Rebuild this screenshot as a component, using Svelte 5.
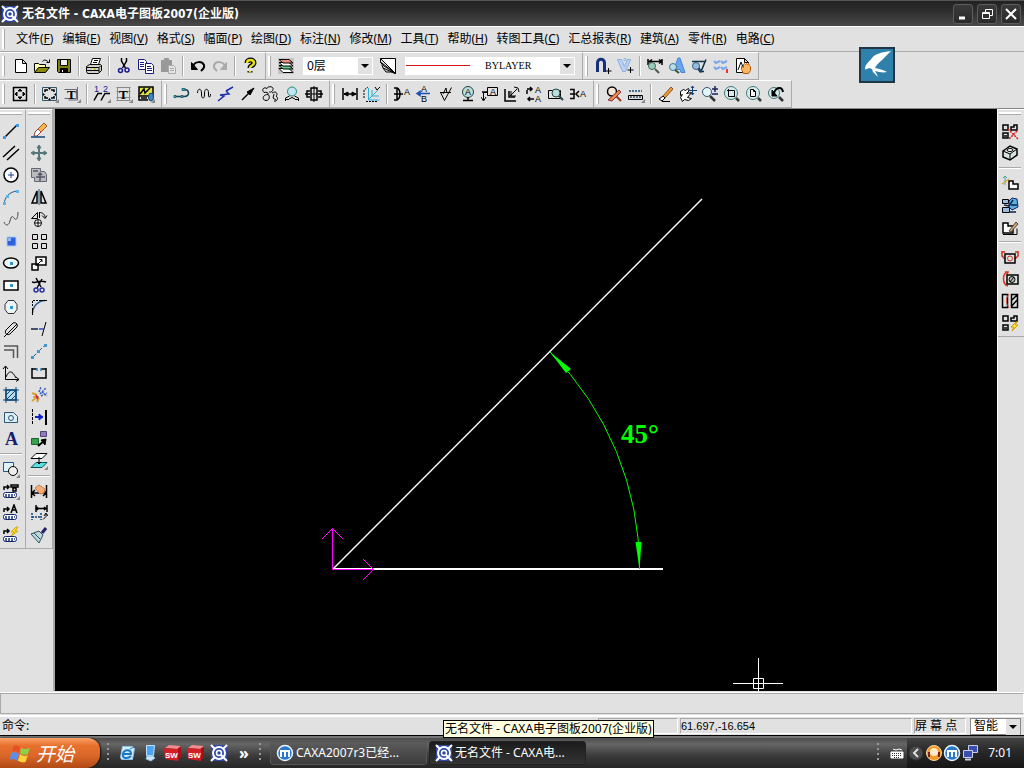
<script lang="ts">
    // every glyph lives on an 18x18 grid, black 1px outline unless it says otherwise
    const icons: Record<string, string> = {
        // file toolbar
        new: '<path fill="#fff" d="M4.5 2.5h7l4 4v9h-11z M11.5 2.5v4h4"/>',
        open: '<path fill="#ffffb0" d="M1.5 14.5v-8h4l1 1h6v3"/><path fill="#8a8a10" d="M1.5 15.5l4-5h11l-4 5z"/><path d="M9.5 4.5c1-2 4-2 6 1M16.5 2.5v3h-3"/>',
        save: '<path fill="#808010" d="M2.5 2.5h13v13h-12l-1-1z"/><path fill="#eee" d="M5.5 2.5h7v6h-7z"/><path fill="#000" d="M5.5 11.5h7v4h-7z"/><path stroke="#fff" d="M7.5 13v2"/>',
        print: '<path fill="#fff" d="M5.500 7.500l2-6h8l-2 6z"/><path d="M9 3.500h4M8 5.500h4"/><path fill="#d0d0c8" d="M1.500 9.500l3-2h11l1 1v5l-3 3h-11l-1-2z"/><path d="M2 10.500h12v5M2 13.500h12M14 10.500l2-2"/><path stroke="#cc0" stroke-width="1.500" d="M9 12h2"/>',
        cut: '<path stroke-width="1.500" d="M6.500 1v3l4 7M11.500 1v3l-4 7"/><g stroke="#1a1a90" stroke-width="1.500"><circle cx="5.500" cy="13.500" r="2"/><circle cx="12" cy="13" r="2"/></g>',
        copy: '<g stroke="#1a1a80" fill="#fff"><path d="M1.500 2.500h6l2 2v8h-8z"/><path d="M8.500 6.500h6l2 2v8h-8z"/><path d="M3 5.500h4M3 7.500h4M3 9.500h4M10 9.500h4M10 11.500h5M10 13.500h5"/></g>',
        paste: '<path fill="#999" stroke="#999" d="M2.500 3.500h10v11h-10z M5.500 1.500h4v3h-4z"/><path fill="#e4e4e4" stroke="#aaa" d="M9.500 8.500h5l2 2v6h-7z M11 11.500h4M11 13.500h4"/>',
        undo: '<path stroke-width="2" d="M4 9c2-5 9-5 11-1c1 3-1 4-3 6"/><path fill="#000" d="M2.500 5.500v7h6z"/>',
        redo: '<g stroke="#aaa"><path stroke-width="2" d="M14 9c-2-5-9-5-11-1c-1 3 1 4 3 6"/><path fill="#aaa" d="M15.500 5.500v7h-6z"/></g>',
        help: '<path stroke-width="5" d="M6 6c0-4 7-4 7 0c0 3-4 2-4 5M9 14v1.500"/><path stroke="#e8e010" stroke-width="2.500" d="M6 6c0-4 7-4 7 0c0 3-4 2-4 5M9 14v1.500"/>',
        // layers
        layers: '<path fill="#c4c4c4" stroke="none" d="M1 1h16v16H1z"/><path fill="#fff" d="M2 11.500h10l4 4H6z"/><path fill="#6c8" d="M2 8.500h10l4 3.500H6z"/><path fill="#fff" d="M2 5.500h10l4 3.500H6z"/><path fill="#f08a7a" d="M2 2.500h10l4 3.500H6z"/>',
        layerProps: '<path d="M1.500 1.500h15v15z" fill="#fff"/><path d="M1.500 1.500v3.500l15 11.500M1.500 5l2 3 13 8.500M3 8l1 3 12 5.500M4 11l3 4h8"/>',
        // snap
        magnet: '<path stroke="#16307e" stroke-width="3" d="M3.500 15V6c0-5 7-5 7 0v9"/><path d="M14.500 11v6M11.500 14h6"/>',
        snapV: '<path fill="#b7d2f4" stroke="#8bb0e4" d="M1.500 2.500h4l3 7 3-7h3l-5 12h-3z"/><path fill="#eef" stroke="#9bc" d="M8 1.500h2v2H8z"/><path d="M14.500 10v6M11.500 13h6"/>',
        dimEdit: '<path stroke-width="1.500" d="M2 2v6M16 2v6M3 4.500h13M3 4.500l3-2M3 4.500l3 2M16 4.500l-3-2M16 4.500l-3 2"/><circle cx="6" cy="9" r="3.500" fill="#9cb" stroke="#465"/><path stroke="#555" stroke-width="2" d="M9 12l4 4"/>',
        textFind: '<path fill="#6aa5ee" stroke="#4a84d8" d="M10 1h2l5 14.500h-4l-1-3H8l-1-3z"/><circle cx="5" cy="10" r="3.500" fill="#bde" stroke="#478"/><path stroke="#353" stroke-width="2" d="M7 13l4 3"/>',
        roughFind: '<path stroke="#134" stroke-width="1.500" d="M2 4.500h14M5 4.500l6 10 5-12M9 14.500h5"/><circle cx="6" cy="9" r="3.500" fill="#9bd" stroke="#368"/><path stroke="#246" stroke-width="2" d="M8 12l3 3"/>',
        waves: '<path stroke="#7aa6ec" stroke-width="2" d="M2 4l2 2 4-2M9 4l2 2 4-2M2 10l2 2 4-2M9 10l2 2 4-2"/><path stroke="#e33" stroke-width="2" d="M15 12v4"/>',
        pagePan: '<path fill="#fff" d="M2.500 1.500h8l4 4v10h-12z M10.500 1.500v4h4"/><path d="M4 13l3-8 2 5"/><path fill="#f9b765" stroke="#b45a10" d="M7.500 9.500l2 1v-3l1-1 1 1 1-1 1 1 1-1 1 2 1 1v4l-2 3h-5l-2-4z"/>',
        // sheet setup
        fit: '<path d="M2.500 2.500h13v13h-13z" stroke-width="1.500"/><path fill="#000" d="M9 4l2 2H7zM9 14l2-2H7zM4 9l2-2v4zM14 9l-2-2v4z"/>',
        frame: '<path stroke="#356" d="M1.500 2.500h14v13h-14z"/><path stroke-width="1.500" d="M4 7V5h3M10 5h3v2M13 11v2h-3M7 13H4v-2"/><path fill="#000" stroke="none" d="M7 3h3l-1.500 2zM7 15h3l-1.500-2zM2 8l2 1.500L2 11zM15 8l-2 1.500 2 1.500z"/><path fill="#888" stroke="none" d="M18 14v4h-4z"/>',
        frameText: '<path stroke="#667" d="M1.500 4.500h12v9h-12M14.500 2v13h-9"/><text x="4" y="14">T</text><path fill="#888" stroke="none" d="M18 14v4h-4z"/>',
        number: '<text class="small num" x="1" y="7">1</text><text class="small num" x="10" y="7">2</text><path d="M1 15.500l4-7h4M8 15.500l4-7h5" stroke-width="1.500"/><path fill="#888" stroke="none" d="M18 14v4h-4z"/>',
        table: '<path stroke="#888" d="M1.500 2.500h14M1.500 6.500h14M1.500 12.500h14M1.500 15.500h14M2.500 2v14M14.500 2v14"/><text x="4" y="14">T</text><path fill="#888" stroke="none" d="M18 14v4h-4z"/>',
        sheet: '<path fill="#e6e04a" stroke-width="1.500" d="M2 2h14v9H2z"/><path stroke-width="1.500" d="M3 9l4-5 1 4 5-5M2 11v4h9M4 13h6"/><ellipse cx="14" cy="12" rx="2.500" ry="4" fill="#48b" stroke="#147"/><path fill="#888" stroke="none" d="M18 14v4h-4z"/>',
        // advanced curves
        hook: '<path stroke="#19404a" stroke-width="1.500" d="M2 11.500h9c6 0 6-7 0-7"/><path stroke="#267" fill="#5bc" d="M1 10.500h2v2H1zM8 10.500h2v2H8zM9 3.500h3v2H9z"/>',
        wave: '<path d="M2.500 8c0-5 4-5 4 0v2c0 4 3 4 3 0V8c0-5 4-5 4 0v2c0 3 2 3 2-1"/>',
        breakLine: '<path stroke="#1d2fa8" stroke-width="1.500" d="M1 16l6-5-4-1M3 10l9-1-3-3M9 6l7-4"/>',
        arrow: '<path stroke-width="1.500" d="M3 15L12 6"/><path fill="#000" d="M15 3l-7 4 3 3z"/>',
        cloud: '<path d="M3 7.500c-3-3 0-6 3-4c1-3 7-2 6 1c-1 3-3 3-4 2M3 7.500c3-1 5 1 4 2c-6 0-6 6-2 6c4 0 4-5 2-6M11 8c5-3 6 2 4 3c3 2 1 6-2 5M13 9l-1 4 3 2"/>',
        shaft: '<circle cx="9" cy="6.500" r="4.500" fill="#bfe4f2" stroke="#287"/><path d="M2.500 16v-3l4-2M15.500 16v-3l-4-2M3 14.500h3M12 14.500h3M6 14l3-1.500 3 1.500"/>',
        section: '<path stroke-width="1.500" d="M5 6H2v6h3M13 6h3v6h-3M6 3h6v12H6zM0 9h5M13 9h5"/><path d="M9 1v16M6 9h6"/>',
        // dimensions
        dim: '<path stroke-width="1.500" d="M2 3v12M16 3v12M3 9h12"/><path fill="#000" d="M3 9l4-2v4zM15 9l-4-2v4z"/>',
        dimCoord: '<path stroke="#2ab0dc" d="M5.500 3v12h11M5 15L15 5M9 5v6h7"/><path stroke-dasharray="2 1" d="M1 13V5l4-3M3 16.500h11"/><path d="M12 2l2 3 3-3"/>',
        tolerance: '<path stroke-width="1.500" d="M1 3h3c4 2 4 10 0 12H1M1 9h9M4 3v12"/><text class="small" x="11" y="10">A</text>',
        datum: '<path stroke="#1d4dbb" stroke-width="1.500" d="M15 8.500H2M2 8.500l3-2v4z"/><text class="small" x="6" y="7">A</text><text class="small" x="6" y="17">B</text>',
        rough: '<path d="M3.500 7.500l4 8 7-13M3 7.500h11"/><path d="M6 9l3-6 1 5"/>',
        balloon: '<circle cx="9" cy="7" r="5.500" fill="#bdd" stroke="#244"/><text class="small" x="6" y="10">A</text><path d="M9 12v4M4 15.500h10" stroke-width="1.500"/>',
        frameA: '<path d="M6.500 2.500h10v8h-10zM2.500 15V7.500h4M0 12l2.500 4L5 12"/><path stroke-width="1.500" d="M1 7h5"/><text class="small" x="9" y="10">A</text>',
        weld: '<path stroke-width="1.500" d="M2 4v12h11M6 6v6h6"/><path d="M7 11l7-7M8 6v5h5M11 2l4 1 1 4"/>',
        swapA: '<path stroke-width="1.500" d="M2 4h5M5 2l2 2-2 2M2 5v4M9 14H3M5 12l-2 2 2 2"/><text class="small" x="10" y="8">A</text><text class="small" x="10" y="17">A</text>',
        findBox: '<path d="M1.500 5.500h12v8h-12z"/><circle cx="9" cy="8" r="4" fill="#bdd" stroke="#244"/><path stroke="#244" stroke-width="2" d="M12 11l4 4"/>',
        bracketA: '<path d="M1 4.500h4v9H1M1 9h5M10 6l-3 3 3 3" stroke-width="1.500"/><text class="small" x="11" y="12">A</text>',
        // query and view
        query: '<circle cx="7" cy="6.500" r="4.500" fill="#f4e6d8" stroke-width="1.500"/><path stroke="#932" stroke-width="2" d="M10 10l6 6"/><path fill="#e8894a" stroke="#834" d="M14 5l2 2-9 9-4-1z"/>',
        measure: '<path stroke="#147" stroke-dasharray="2 1" stroke-width="1.500" d="M2 6h13"/><path fill="#cde" d="M1.500 10.500h14v4h-14z"/><path d="M4 11v2M7 11v2M10 11v2M13 11v2"/><path fill="#888" stroke="none" d="M18 14v4h-4z"/>',
        redraw: '<path fill="#f39b28" stroke="#853" d="M6 11L14 2l2 2-8 9z"/><path fill="#fff" d="M2 14l4-3 2 2-3 3zM5 16.500h8"/>',
        hand: '<path fill="#fff" d="M1.500 6.500l3-2 2 1 3-2 1 2-3 3 5-1-4 5 4 1-3 2-4-1-2 2-2-4 2-3-2 1z"/><path stroke="#147" d="M13.500 1v9M9 5.500h9M12 3l1.500-2L15 3M12 8l1.500 2L15 8"/>',
        zoomPM: '<circle cx="6" cy="7" r="4.500" fill="#e2f6fa" stroke="#356"/><path stroke-width="2.500" stroke="#333" d="M9 11l5 5"/><path stroke="#1a2360" stroke-width="1.500" d="M14 1v6M11 4h6M11 9h6"/>',
        zoomWin: '<circle cx="8" cy="8" r="6.500" fill="#d4ecf0" stroke="#477"/><path stroke-width="2.500" stroke="#333" d="M13 13l3 3"/><path d="M5.500 4v7.500H12M4 5.500h7.500V12"/>',
        zoomAll: '<circle cx="8" cy="8" r="6.500" fill="#d4ecf0" stroke="#477"/><path stroke-width="2.500" stroke="#333" d="M13 13l3 3"/><path fill="#fff" d="M5.500 4.500h3l2 2v5h-5z M8.500 4.500v2h2"/>',
        zoomBack: '<circle cx="7" cy="8" r="5.500" fill="#d4ecf0" stroke="#477"/><path stroke-width="2.500" stroke="#333" d="M12 12l4 4"/><path fill="#000" d="M5 11V5l5 6z"/><path stroke-width="2" d="M7 8c2-6 8-7 9-1"/>',
        // draw column
        line: '<path stroke-width="1.500" d="M3 15L15 3"/><path fill="#3c9ae0" stroke="none" d="M1 14h3v3H1zM14 2h3v3h-3z"/>',
        parallel: '<path stroke-width="1.500" d="M1 13L13 2M5 16L17 5"/>',
        circle: '<circle cx="9" cy="9" r="7" fill="#fff" stroke-width="1.500"/><path stroke="#1d3aa0" d="M9 6v6M6 9h6"/>',
        arc: '<path stroke="#258" d="M2 16C3 9 7 4 15 3"/><path fill="#5bb4ec" stroke="none" d="M1 14h3v3H1zM4 7h3v3H4zM14 2h3v3h-3z"/>',
        spline: '<path d="M2 12c2 5 5 3 6-1s2-6 4-3 4 1 4-6" stroke="#444"/>',
        point: '<path fill="#2e62dc" stroke="#a9c8f4" d="M5 5h9v9H5z"/><path fill="#8fb6f6" stroke="none" d="M6 6h3v3H6z"/>',
        ellipse: '<ellipse cx="9" cy="9" rx="7.500" ry="5" fill="#eaf7fb" stroke-width="1.500"/><path fill="#39c" stroke="none" d="M8 8h3v3H8z"/>',
        rect: '<path fill="#fff" stroke-width="1.500" d="M2 5h14v9H2z"/><path fill="#39c" stroke="none" d="M8 8h3v3H8z"/>',
        polygon: '<path fill="#e8f4f8" stroke="#333" d="M6 2.500h6l3 4v5l-3 4H6l-3-4v-5z"/><path fill="#39c" stroke="none" d="M8 8h3v3H8z"/>',
        centerline: '<path d="M4 10l7-7c3-1 5 1 4 4l-7 7c-3 2-6-1-4-4zM2 17l13-13"/>',
        offset: '<path stroke="#555" stroke-width="1.500" d="M2 4h13.500v12M2 8h9.500v8"/>',
        formula: '<path d="M3.500 2v13.500H17M1 5l2.500-3L6 5M14 13l3 2.500-3 2M4 13c3-7 6-7 10 1"/>',
        hatch: '<path fill="#b9dcec" stroke="#0b4a78" stroke-width="1.500" d="M4 4h10v10H4z"/><path stroke="#0b4a78" d="M4 1v16M14 1v16M1 4h16M1 14h16M4 9l5-5M4 14L14 4M9 14l5-5"/>',
        image: '<path fill="#d8eef4" stroke="#357" d="M2.500 4.500h9l4 4v6h-13z"/><circle cx="9" cy="10" r="2.500" stroke="#357"/>',
        text: '<text class="big" x="3" y="15">A</text>',
        block: '<path fill="#dff3fa" stroke="#258" d="M1.500 2.500h10v9h-10z"/><circle cx="11" cy="11" r="4.500" fill="#eee"/><path fill="#888" stroke="none" d="M18 14v4h-4z"/>',
        lib1: '<path stroke-width="1.500" d="M2 8V5h5M5 3l2 2-2 2M9 3h7v2H9zM11 6h3v3h-3z"/><rect x="1.500" y="10.500" width="13" height="5" rx="2" fill="#fff" stroke="#126"/><path stroke="#138" stroke-width="1.500" d="M4 12v3M7 12v3M10 12v3M12 13h1"/><path fill="#888" stroke="none" d="M18 14v4h-4z"/>',
        lib2: '<path stroke-width="1.500" d="M2 8V5h5M5 3l2 2-2 2"/><path stroke-width="1.500" d="M9 9l3-8 3 8M10 6h4"/><rect x="1.500" y="10.500" width="13" height="5" rx="2" fill="#fff" stroke="#126"/><path stroke="#138" stroke-width="1.500" d="M4 12v3M7 12v3M10 12v3M12 13h1"/>',
        lib3: '<path stroke-width="1.500" d="M2 8V5h5M5 3l2 2-2 2"/><path fill="#fd2" stroke="#d8a800" d="M14 1l-5 5h3l-3 4 7-5h-3l3-4z"/><rect x="1.500" y="10.500" width="13" height="5" rx="2" fill="#fff" stroke="#126"/><path stroke="#138" stroke-width="1.500" d="M4 12v3M7 12v3M10 12v3M12 13h1"/>',
        // edit column
        erase: '<path fill="#f6b64c" stroke="#a55a20" d="M8 7l6-6 3 3-6 6z"/><path fill="#fff" stroke="#844" d="M5 10l3-3 3 3-4 4H4z"/><path stroke="#c44" d="M8 7l3 3"/><path stroke="#147" stroke-width="1.500" d="M1 15h14"/>',
        move: '<path stroke="#577" stroke-width="2" d="M9 3v12M3 9h12"/><path fill="#577" stroke="#577" d="M9 1l2 3H7zM9 17l2-3H7zM1 9l3-2v4zM17 9l-3-2v4z"/>',
        copyMove: '<path fill="#b9bcbc" stroke="#667" d="M1.500 2.500h9v3h4l2 3v7h-12v-4h-3z"/><path stroke="#556" stroke-width="1.500" d="M10 7v8M6 11h9M3 5h5M8 9l2-2 2 2"/>',
        mirror: '<path stroke-width="1.500" d="M7 3v12H2zM11 3v12h5z"/><path stroke="#157" d="M9 1v16"/>',
        rotate: '<path d="M1.500 8.500l6-6v6zM9.500 2v6M9 2.500c4 0 6 2 6 5M12 5.500l3 3 2-3"/><circle cx="8" cy="13" r="3.500" fill="#fff"/><path d="M8 10v6M5 13h6"/>',
        array: '<path d="M2.500 2.500h5v5h-5zM11.500 2.500h5v5h-5zM2.500 11.500h5v5h-5zM11.500 11.500h5v5h-5z"/>',
        scale: '<path fill="#fff" stroke-width="1.500" d="M6 3h10v8H6zM2 10h6v6H2z"/><path d="M8 10l4-4M9.500 5.500H12V8"/>',
        trim: '<path d="M2 6c5 2 7-3 14 0M6 2l5 9M12 3L7 12" stroke-width="1.500"/><g stroke="#2733a0" stroke-width="1.500"><circle cx="6" cy="14" r="2"/><circle cx="12" cy="14" r="2"/></g>',
        fillet: '<path stroke-dasharray="2 1" d="M2.500 8V2.500H9"/><path stroke="#1f5c9c" stroke-width="1.500" d="M2.500 15C3 8 8 3 15 2.500"/><path d="M2.500 10v7M9 2.500h8"/>',
        extend: '<path d="M12 16l4-14"/><path stroke="#124" stroke-width="1.500" d="M1 9h7"/><path stroke-width="1.500" d="M9 9h5" stroke="#2a4ac0"/>',
        breakSeg: '<path stroke="#258" stroke-dasharray="6 2" d="M2 16L16 2"/><path fill="#49c" stroke="none" d="M1 14h3v3H1zM7 8h3v3H7zM14 2h3v3h-3z"/>',
        explode: '<path stroke-width="1.500" d="M2 5h5M11 5h5M2 4v10h14V4"/><path stroke="#38b" stroke-width="1.500" d="M7 4v3M11 4v3"/>',
        burst: '<path stroke="#daa23a" stroke-width="2" d="M2 15l4-3M2 7l5 2M7 16l2-4M3 11h3"/><path stroke="#3558b8" stroke-width="1.500" stroke-dasharray="2 1" d="M10 8l6-6M11 10l6-3M9 6l2-5M12 6l5 4"/><path fill="#c23" stroke="none" d="M5 8l4 3-2 3z"/>',
        stretch: '<path d="M2.500 1v16" stroke-dasharray="3 1"/><path stroke="#12c" stroke-width="2" d="M5 9h5"/><path fill="#12c" stroke="#12c" d="M13 9l-4-3v6z"/><path stroke-width="2" d="M16 2v15"/>',
        replace: '<path fill="#3aa04a" stroke="#163" d="M1.500 8.500h7v6h-7z"/><path fill="#8a80bc" stroke="#547" d="M10.500 1.500h6v5h-6z"/><path stroke-width="2" d="M8 16l6-5"/><path fill="#000" d="M16 9l-1 6-4-5z"/>',
        order: '<path fill="#fff" d="M6 1.500h11l-5 5H1z"/><path fill="#5fdce0" stroke="#055" d="M6 10.500h11l-5 5H1z"/><path d="M9 5v7M7 10l2 2 2-2"/><path fill="#888" stroke="none" d="M18 14v4h-4z"/>',
        editDim: '<path stroke-width="1.500" d="M1.500 3v13M16.500 3v13M2 11h14M5 8l-3 3 3 3M13 8l3 3-3 3"/><path fill="#f6ad76" stroke="#c08050" d="M5 6l4-3 6 4-1 4-4 1z"/>',
        moveDim: '<path stroke-width="1.500" d="M6 1v7M17 1v7M6 4.500h10M8 3L6 4.500 8 6M14 3l2 1.500L14 6"/><path stroke="#147" stroke-width="1.500" stroke-dasharray="2 1" d="M2 9v7M11 9v7M2 13h9"/><path d="M13 15.500l3-3V10M14 12l2-3 2 3"/>',
        brush: '<path fill="#bcd4e0" stroke="#355" d="M1 8l8-3 4 4-4 8z"/><path stroke="#226" stroke-width="3" d="M12 7l4-5"/><path stroke="#355" d="M4 7l6 6"/>',
        // library column
        parts: '<path stroke-width="1.500" d="M2 3h5v5H2zM10 8V5h3V3h3v5zM2 11h5v5H2zM3 14h3"/><path stroke="#c22" stroke-dasharray="2 1" stroke-width="1.500" d="M7 7l10 10M16 9l-8 8"/>',
        cube: '<path fill="#d5e2de" stroke-width="1.500" d="M2 7l7-5 7 3v6l-7 5-7-3z"/><path d="M2 7l7 3 7-5M9 10v6"/><ellipse cx="9" cy="6" rx="3" ry="1.500" fill="#fff"/>',
        partMove: '<path stroke="#4aa" d="M4 2v9M2 4l2-2 2 2"/><path stroke="#d9a83a" stroke-width="1.500" d="M1 10l7-5"/><path fill="#fff" stroke-width="1.500" d="M8 15V7h4v3h5v5z"/>',
        partRot: '<path fill="#9bd" d="M1.500 3.500h6v4h-6zM1.500 11.500h7v5h-7z"/><path fill="#5ab0e8" stroke="#126" d="M8 5l3-3 5 1 1 8-6 3-3-3z"/><path stroke="#124" stroke-width="1.500" d="M3 9l5 1 4-6M10 9h6M9 16h6"/>',
        partPen: '<path fill="#fff" stroke-width="1.500" d="M2 15V5h5v3h5v7z"/><path fill="#c9a57a" stroke="#543" d="M8 13l7-9 2 2-7 8z"/><path d="M2 16.500h14v-6"/>',
        vise: '<path stroke="#c32" stroke-width="1.500" d="M1 3v5l3 3M17 3v5l-3 3M1 4h3M17 4h-3"/><path stroke-width="1.500" d="M4 6h10v9H4z"/><circle cx="9" cy="10.500" r="2.500" stroke="#c32"/>',
        clamp: '<path stroke="#d32" stroke-width="1.500" d="M7 2C1 3 1 14 7 16M4 2l3 0-1 3"/><path stroke-width="1.500" d="M6 5h11v9H6z"/><circle cx="11" cy="9.500" r="3" fill="#bbb"/><path d="M9 12l4-5"/>',
        halfHatch: '<path d="M1.500 2.500h5v13h-5zM10.500 2.500h6v13h-6zM10 9l6-6M10 15l6-7" stroke-width="1.500"/><path stroke="#d43" d="M8 2c-4 5-3 9 0 14"/>',
        partNew: '<path stroke-width="1.500" d="M2 2h5v5H2zM10 7V4h3V2h3v5zM2 11h5v5H2zM3 14h3"/><path fill="#fe3" stroke="#c9a000" d="M15 8l-5 5h3l-2 4 6-6h-3l2-3z"/>',
        // shared application mark
        caxa: '<path fill="#2f49a8" stroke="none" d="M1 1h16v16H1z"/><path stroke="#fff" stroke-width="2" d="M1 1l4 4M17 1l-4 4M1 17l4-4M10 10l7 7"/><circle cx="9" cy="9" r="6" stroke="#fff" stroke-width="2"/><circle cx="9" cy="9" r="2.500" fill="#2f49a8" stroke="#fff" stroke-width="1.500"/>',
        mx: '<circle cx="9" cy="9" r="7.500" fill="#2878ce" stroke="#e9f4ff" stroke-width="1.500"/><path stroke="#fff" stroke-width="2" d="M5 13V7h4v6M9 7h4v6"/>',
        // taskbar
        ie: '<path fill="#d6ecfb" stroke="#8cc4ec" d="M4.500 2.500h10l2 2-2 11h-11l-1-2z"/><path stroke="#1878c8" stroke-width="2" d="M5 10h8c0-5-7-5-8 0s5 5 8 2"/><path stroke="#1878c8" d="M12 5l4-2"/>',
        desktop: '<path fill="#4aa4f0" stroke="#bfe4ff" d="M5.500 1.500h8l-1 10h-7z"/><path fill="#cfe6f8" stroke="#8bd" d="M5 15l1-3h6l2 2-4 3z"/>',
        sw: '<path fill="#a81016" stroke="none" d="M13 5l4-3v11l-4 4z"/><path fill="#f08c8c" stroke="none" d="M1 4l4-3 12 1-4 3z"/><path fill="#d41e26" stroke="none" d="M0 4l14 1v12L1 15z"/><text class="sw" x="1" y="14">SW</text>',
        keyboard: '<path fill="#fff" stroke="#fff" d="M3 8h12v6H3z"/><path stroke="#333" stroke-dasharray="1 1" d="M4 9.500h10M4 11.500h10M6 13.500h6"/><path stroke="#fff" d="M5 5l3 1 3-1 3 1"/>',
        collapse: '<circle cx="9" cy="9" r="7" fill="#4b4b4b" stroke="#333"/><path stroke="#ddd" stroke-width="2" d="M11 5L7 9l4 4"/>',
        headset: '<circle cx="9" cy="9" r="7.500" fill="#f19a27" stroke="#ffd9a0"/><circle cx="9" cy="8" r="4" fill="#ffe9c8" stroke="none"/><path fill="#722" stroke="none" d="M3 8h2v5H3zM13 8h2v5h-2z"/>',
        network: '<path fill="#3c4eb0" stroke="#c9cdee" d="M7.500 1.500h9v7h-9z"/><path fill="#3c4eb0" stroke="#c9cdee" d="M2.500 6.500h9v7h-9z"/><path stroke="#c9cdee" stroke-width="2" d="M4 15.500h6"/>',
        flag: '<g stroke="none"><path fill="#e8502a" d="M3 3c2-1 4-1 6 1L8 9C6 7 4 7 2 8z"/><path fill="#8ed04a" d="M10 4c2 2 5 2 8 0l-2 6c-2 1-5 1-7-1z"/><path fill="#5a8ff0" d="M1 9c2-1 5-1 7 1l-2 6c-2-2-4-2-6-1z"/><path fill="#fdd23c" d="M9 10c2 2 5 2 7 1l-2 6c-2 1-5 0-7-1z"/></g>'
    };

    const menus = [
        ['文件', 'F'], ['编辑', 'E'], ['视图', 'V'], ['格式', 'S'], ['幅面', 'P'],
        ['绘图', 'D'], ['标注', 'N'], ['修改', 'M'], ['工具', 'T'], ['帮助', 'H'],
        ['转图工具', 'C'], ['汇总报表', 'R'], ['建筑', 'A'], ['零件', 'R'], ['电路', 'C']
    ];

    // "|" is a separator
    const fileBar = 'new open save | print | cut copy paste | undo redo | help'.split(' ');
    const snapBar = 'magnet snapV | dimEdit textFind roughFind waves pagePan'.split(' ');
    const secondRow = [
        'fit | frame frameText | number table sheet',
        'hook wave breakLine arrow cloud shaft section',
        'dim dimCoord | tolerance datum rough balloon frameA weld swapA findBox bracketA',
        'query measure | redraw hand zoomPM zoomWin zoomAll zoomBack'
    ].map((bar) => bar.split(' '));
    const drawBar = 'line parallel circle arc spline point ellipse rect polygon centerline offset formula hatch image text | block lib1 lib2 lib3'.split(' ');
    const editBar = 'erase move copyMove mirror rotate array scale trim fillet extend breakSeg explode burst stretch replace order | editDim moveDim brush'.split(' ');
    const libBar = 'parts cube | partMove partRot partPen | vise clamp halfHatch partNew'.split(' ');
    const quickLaunch = ['ie', 'desktop', 'sw', 'sw', 'caxa'];

    let title = '无名文件 - CAXA电子图板2007(企业版)';
    let coords = '61.697,-16.654';
</script>

{#snippet icon(name)}
    <svg class="icon" viewBox="0 0 18 18" aria-hidden="true">{@html icons[name]}</svg>
{/snippet}

{#snippet tools(names)}
    {#each names as name}
        {#if name === '|'}
            <span class="sep"></span>
        {:else}
            <button class="tool" aria-label={name}>{@render icon(name)}</button>
        {/if}
    {/each}
{/snippet}

{#snippet chevron()}
    <svg class="chevron" viewBox="0 0 14 16" aria-hidden="true"><path d="M3 6h8l-4 4z" /></svg>
{/snippet}

<div class="screen">
    <header class="titlebar">
        {@render icon('caxa')}
        <h1>{title}</h1>
        <button class="win" aria-label="最小化"><svg viewBox="0 0 18 18"><path d="M5 13h6" stroke-width="3" /></svg></button>
        <button class="win" aria-label="还原"><svg viewBox="0 0 18 18"><path d="M7.500 7V4.500h7v6H12M4.500 7.500h7v6h-7zM4 8.500h8" /></svg></button>
        <button class="win" aria-label="关闭"><svg viewBox="0 0 18 18"><path d="M4 4l10 10M14 4L4 14" stroke-width="2" /></svg></button>
    </header>

    <nav class="menubar">
        <span class="grip"></span>
        {#each menus as [label, key]}
            <button>{label}(<u>{key}</u>)</button>
        {/each}
    </nav>

    <div class="row">
        <div class="bar"><span class="grip"></span>{@render tools(fileBar)}</div>
        <div class="bar">
            <span class="grip"></span>
            {@render tools(['layers'])}
            <div class="combo layer">
                <select aria-label="图层"><option>0层</option></select>
                {@render chevron()}
            </div>
            {@render tools(['layerProps'])}
            <div class="combo linetype">
                <span class="sample"></span>
                <select aria-label="线型"><option>BYLAYER</option></select>
                {@render chevron()}
            </div>
        </div>
        <div class="bar"><span class="grip"></span>{@render tools(snapBar)}</div>
    </div>

    <div class="row">
        {#each secondRow as bar}
            <div class="bar"><span class="grip"></span>{@render tools(bar)}</div>
        {/each}
    </div>

    <main>
        <aside class="left">
            <div class="column"><span class="grip"></span>{@render tools(drawBar)}</div>
            <div class="column"><span class="grip"></span>{@render tools(editBar)}</div>
        </aside>

        <svg class="canvas" viewBox="0 0 942 582">
            <g stroke="#fff" fill="none">
                <path d="M278 460L647 90" stroke-width="1.400" />
                <path d="M278 460H608" stroke-width="2" />
                <!-- pick box cursor -->
                <path d="M678 574.500h50M703.500 549v33M698.500 569.500h10v10h-10z" />
            </g>
            <!-- user coordinate system -->
            <path d="M277.500 460.500v-41M267 430l10.500-10.500L288 430M277.500 460.500h41M308 450l10.500 10.500L308 471" stroke="#f0f" fill="none" />
            <g stroke="#0f0" fill="none">
                <path d="M495 243A306 306 0 0 1 584.500 460" />
                <path d="M495 243l16 21 5-4zM584.500 460l-4-27h6z" fill="#0f0" stroke="none" />
            </g>
            <text class="angle" x="566" y="334">45°</text>
        </svg>

        <aside class="right">
            <div class="column"><span class="grip"></span>{@render tools(libBar)}</div>
        </aside>
    </main>

    <div class="prompt"></div>

    <div class="status">
        <label for="command">命令:</label>
        <input id="command" type="text" />
        <span class="cell blank"></span>
        <span class="cell coords">{coords}</span>
        <span class="cell mode">屏 幕 点</span>
        <div class="combo snap">
            <select aria-label="捕捉"><option>智能</option></select>
            {@render chevron()}
        </div>
    </div>

    <footer class="taskbar">
        <button class="start">{@render icon('flag')}<span>开始</span></button>
        <span class="dots"></span>
        <div class="quick">
            {#each quickLaunch as name}
                <button aria-label={name}>{@render icon(name)}</button>
            {/each}
            <button class="more">»</button>
        </div>
        <span class="dots"></span>
        <button class="task">{@render icon('mx')}CAXA2007r3已经...</button>
        <div class="holder">
            <button class="task active">{@render icon('caxa')}无名文件 - CAXA电...</button>
            <div class="tooltip" role="tooltip">{title}</div>
        </div>
        <span class="dots last"></span>
        {@render icon('keyboard')}
        <div class="tray">
            {#each ['collapse', 'headset', 'mx', 'network'] as name}
                <button aria-label={name}>{@render icon(name)}</button>
            {/each}
            <time>7:01</time>
        </div>
    </footer>

    <button class="bird" aria-label="悬浮窗">
        <svg viewBox="0 0 32 32"><path d="M30 2c-9 1-16 3-19 7-3 4-7 6-7 11 0 1 2 0 4-1l3 1c1 1 0 3 2 4l4 4c-1-3-2-4-3-6 4 1 8 2 12 1-3-2-7-3-12-4 1-3 4-5 7-8z" /></svg>
    </button>
</div>

<style>
    :global(body) {
        margin: 0;
        background: #e1e1e1;
    }

    .screen {
        position: relative;
        display: flex;
        flex-direction: column;
        height: 100vh;
        overflow: hidden;
        background: #e1e1e1;
        color: #000;
        font-family: "Noto Sans", "Noto Sans CJK SC", sans-serif;
        font-size: 12px;
        line-height: 16px;
    }

    button,
    select,
    input {
        margin: 0;
        padding: 0;
        border: none;
        border-radius: 0;
        outline: none;
        background: none;
        color: inherit;
        font: inherit;
        white-space: nowrap;
    }

    .icon {
        display: block;
        flex: none;
        width: 18px;
        height: 18px;
        fill: none;
        stroke: #000;
    }

    .icon :global(text) {
        fill: #000;
        stroke: none;
        font: bold 13px "Liberation Serif", serif;
    }

    .icon :global(text.small) {
        font: 9px "Liberation Sans", sans-serif;
    }

    .icon :global(text.num) {
        fill: #1a1a90;
    }

    .icon :global(text.big) {
        fill: #14206e;
        font-size: 18px;
    }

    .icon :global(text.sw) {
        fill: #fff;
        font: bold 8px "Liberation Sans", sans-serif;
    }

    /* title bar */
    .titlebar {
        display: flex;
        align-items: center;
        gap: 4px;
        height: 26px;
        padding: 0 3px 0 1px;
        box-sizing: border-box;
        border-top: 1px solid #555;
        background: linear-gradient(#222, #2d2d2d 40%, #4a4a4a);
        color: #fff;
    }

    h1 {
        flex: 1;
        margin: 0 0 0 -1px;
        font: bold 12px/16px "DejaVu Sans Condensed", "Noto Sans CJK SC", sans-serif;
    }

    .win {
        width: 20px;
        height: 20px;
        border: 1px solid #5d5d5d;
        border-radius: 3px;
        background: linear-gradient(#3a3a3a, #2a2a2a);
    }

    .win svg {
        display: block;
        width: 18px;
        height: 18px;
        fill: none;
        stroke: #fff;
    }

    /* menu and toolbars */
    .menubar {
        display: flex;
        align-items: center;
        gap: 9px;
        height: 26px;
        box-sizing: border-box;
        border-top: 1px solid #fff;
        border-bottom: 1px solid #aaa;
    }

    .menubar .grip {
        margin-right: 2px;
    }

    .row {
        display: flex;
        height: 28px;
    }

    .bar {
        display: flex;
        align-items: center;
        padding-right: 4px;
        border: 1px solid;
        border-color: #fff #aaa #aaa #fff;
        border-left: none;
    }

    .grip {
        flex: none;
        width: 2px;
        height: 20px;
        margin: 0 4px 0 2px;
        border-right: 1px solid #aaa;
        background: #fff;
    }

    .tool {
        display: grid;
        place-items: center;
        flex: none;
        width: 22px;
        height: 22px;
    }

    .sep {
        flex: none;
        width: 1px;
        height: 20px;
        margin: 0 3px;
        border-left: 1px solid #aaa;
        background: #fff;
    }

    .combo {
        position: relative;
        display: flex;
        height: 18px;
        background: #fff;
    }

    .combo select {
        appearance: none;
        width: 100%;
        padding-left: 4px;
    }

    .chevron {
        position: absolute;
        top: 1px;
        right: 1px;
        width: 14px;
        height: 16px;
        background: #e1e1e1;
        pointer-events: none;
    }

    .layer {
        width: 70px;
        margin: 0 4px 0 6px;
    }

    .linetype {
        width: 170px;
        margin: 0 3px 0 6px;
    }

    .linetype select {
        padding-left: 80px;
        font: 10px/18px "Liberation Serif", serif;
    }

    .sample {
        position: absolute;
        top: 8px;
        left: 1px;
        width: 64px;
        height: 1px;
        background: #d01818;
    }

    /* work area */
    main {
        display: flex;
        flex: 1;
        min-height: 0;
        border-top: 1px solid #888;
    }

    .left,
    .right {
        display: flex;
        flex: none;
        align-items: flex-start;
    }

    .column {
        display: flex;
        flex-direction: column;
        align-items: center;
        width: 26px;
        padding-bottom: 2px;
        border: 1px solid;
        border-color: #fff #aaa #aaa #fff;
        border-width: 1px 1px 1px 0;
    }

    .left .column:first-child {
        width: 22px;
        padding-right: 3px;
    }

    .left {
        border-right: 2px solid #aaa;
    }

    .right {
        border-left: 1px solid #fff;
    }

    .right .column {
        width: 24px;
        padding-right: 2px;
        border-right: none;
    }

    .column .grip {
        width: 22px;
        height: 2px;
        margin: 2px 0 5px;
        border-right: none;
        border-bottom: 1px solid #aaa;
    }

    .column .sep {
        width: 22px;
        height: 1px;
        margin: 3px 0;
        border-left: none;
        border-top: 1px solid #aaa;
    }

    .canvas {
        flex: 1;
        min-width: 0;
        height: 100%;
        background: #000;
    }

    .angle {
        fill: #0f0;
        font: bold 27px "Liberation Serif", serif;
    }

    /* prompt and status */
    .prompt {
        height: 19px;
        margin-top: 2px;
        border: 1px solid #aaa;
        border-right-color: #fff;
        box-shadow: 0 -1px #fff;
    }

    .status {
        display: flex;
        align-items: center;
        gap: 2px;
        height: 18px;
        margin-top: 1px;
        padding: 0 3px 0 2px;
        border-top: 2px solid #fff;
        border-bottom: 1px solid #000;
    }

    .status input {
        flex: 1;
        min-width: 0;
    }

    .cell {
        height: 16px;
        box-sizing: border-box;
        border: 1px solid;
        border-color: #aaa #fff #fff #aaa;
        line-height: 14px;
        white-space: nowrap;
    }

    .blank {
        width: 80px;
    }

    .coords {
        width: 232px;
        font: 11px/14px "Liberation Sans", sans-serif;
    }

    .mode {
        width: 52px;
    }

    .snap {
        width: 51px;
        height: 17px;
        margin-left: 2px;
        outline: 1px solid #888;
        outline-offset: -1px;
    }

    /* taskbar */
    .taskbar {
        display: flex;
        align-items: center;
        height: 32px;
        box-sizing: border-box;
        border-top: 2px solid #777;
        background: linear-gradient(#4c4c4c, #666 20%, #3a3a3a 60%, #262626);
        color: #fff;
    }

    .start {
        display: flex;
        align-items: center;
        gap: 6px;
        width: 100px;
        height: 30px;
        padding-left: 10px;
        border-radius: 0 12px 14px 0;
        background: linear-gradient(#f9a266, #e8712c 25%, #d9662a 60%, #b04a14);
        font: italic 19px/24px "Noto Sans CJK SC", sans-serif;
        box-shadow: 1px 0 2px #111;
    }

    .start .icon {
        width: 20px;
        height: 20px;
    }

    .dots {
        width: 4px;
        height: 20px;
        margin: 0 7px;
        background: radial-gradient(circle at 1px 1px, #999 1px, transparent 1px) 0 0 / 4px 5px;
    }

    .quick {
        display: flex;
        align-items: center;
        gap: 5px;
    }

    .more {
        width: 16px;
        margin-left: 3px;
        font-size: 16px;
        font-weight: bold;
    }

    .task {
        display: flex;
        align-items: center;
        gap: 2px;
        width: 157px;
        height: 24px;
        padding-left: 5px;
        border: 1px solid #555;
        border-radius: 3px;
        box-sizing: border-box;
        background: linear-gradient(#5c5c5c, #3c3c3c);
    }

    .active {
        border-color: #222;
        background: linear-gradient(#1c1c1c, #333);
    }

    .holder {
        position: relative;
        margin-left: 2px;
    }

    .tooltip {
        position: absolute;
        bottom: 27px;
        left: 14px;
        padding: 0 1px;
        border: 1px solid #000;
        background: #ffffe1;
        color: #000;
        white-space: nowrap;
    }

    .last {
        margin-left: auto;
    }

    .tray {
        display: flex;
        align-items: center;
        height: 30px;
        margin-left: 1px;
        padding-right: 12px;
        background: linear-gradient(#444, #2a2a2a 40%, #161616);
    }

    .tray time {
        margin-left: 9px;
    }

    /* floating desktop widget */
    .bird {
        position: absolute;
        top: 47px;
        right: 129px;
        width: 36px;
        height: 36px;
        border: 2px solid #1f3646;
        background: #2f80aa;
    }

    .bird svg {
        display: block;
        width: 32px;
        height: 32px;
        fill: #fff;
    }
</style>
